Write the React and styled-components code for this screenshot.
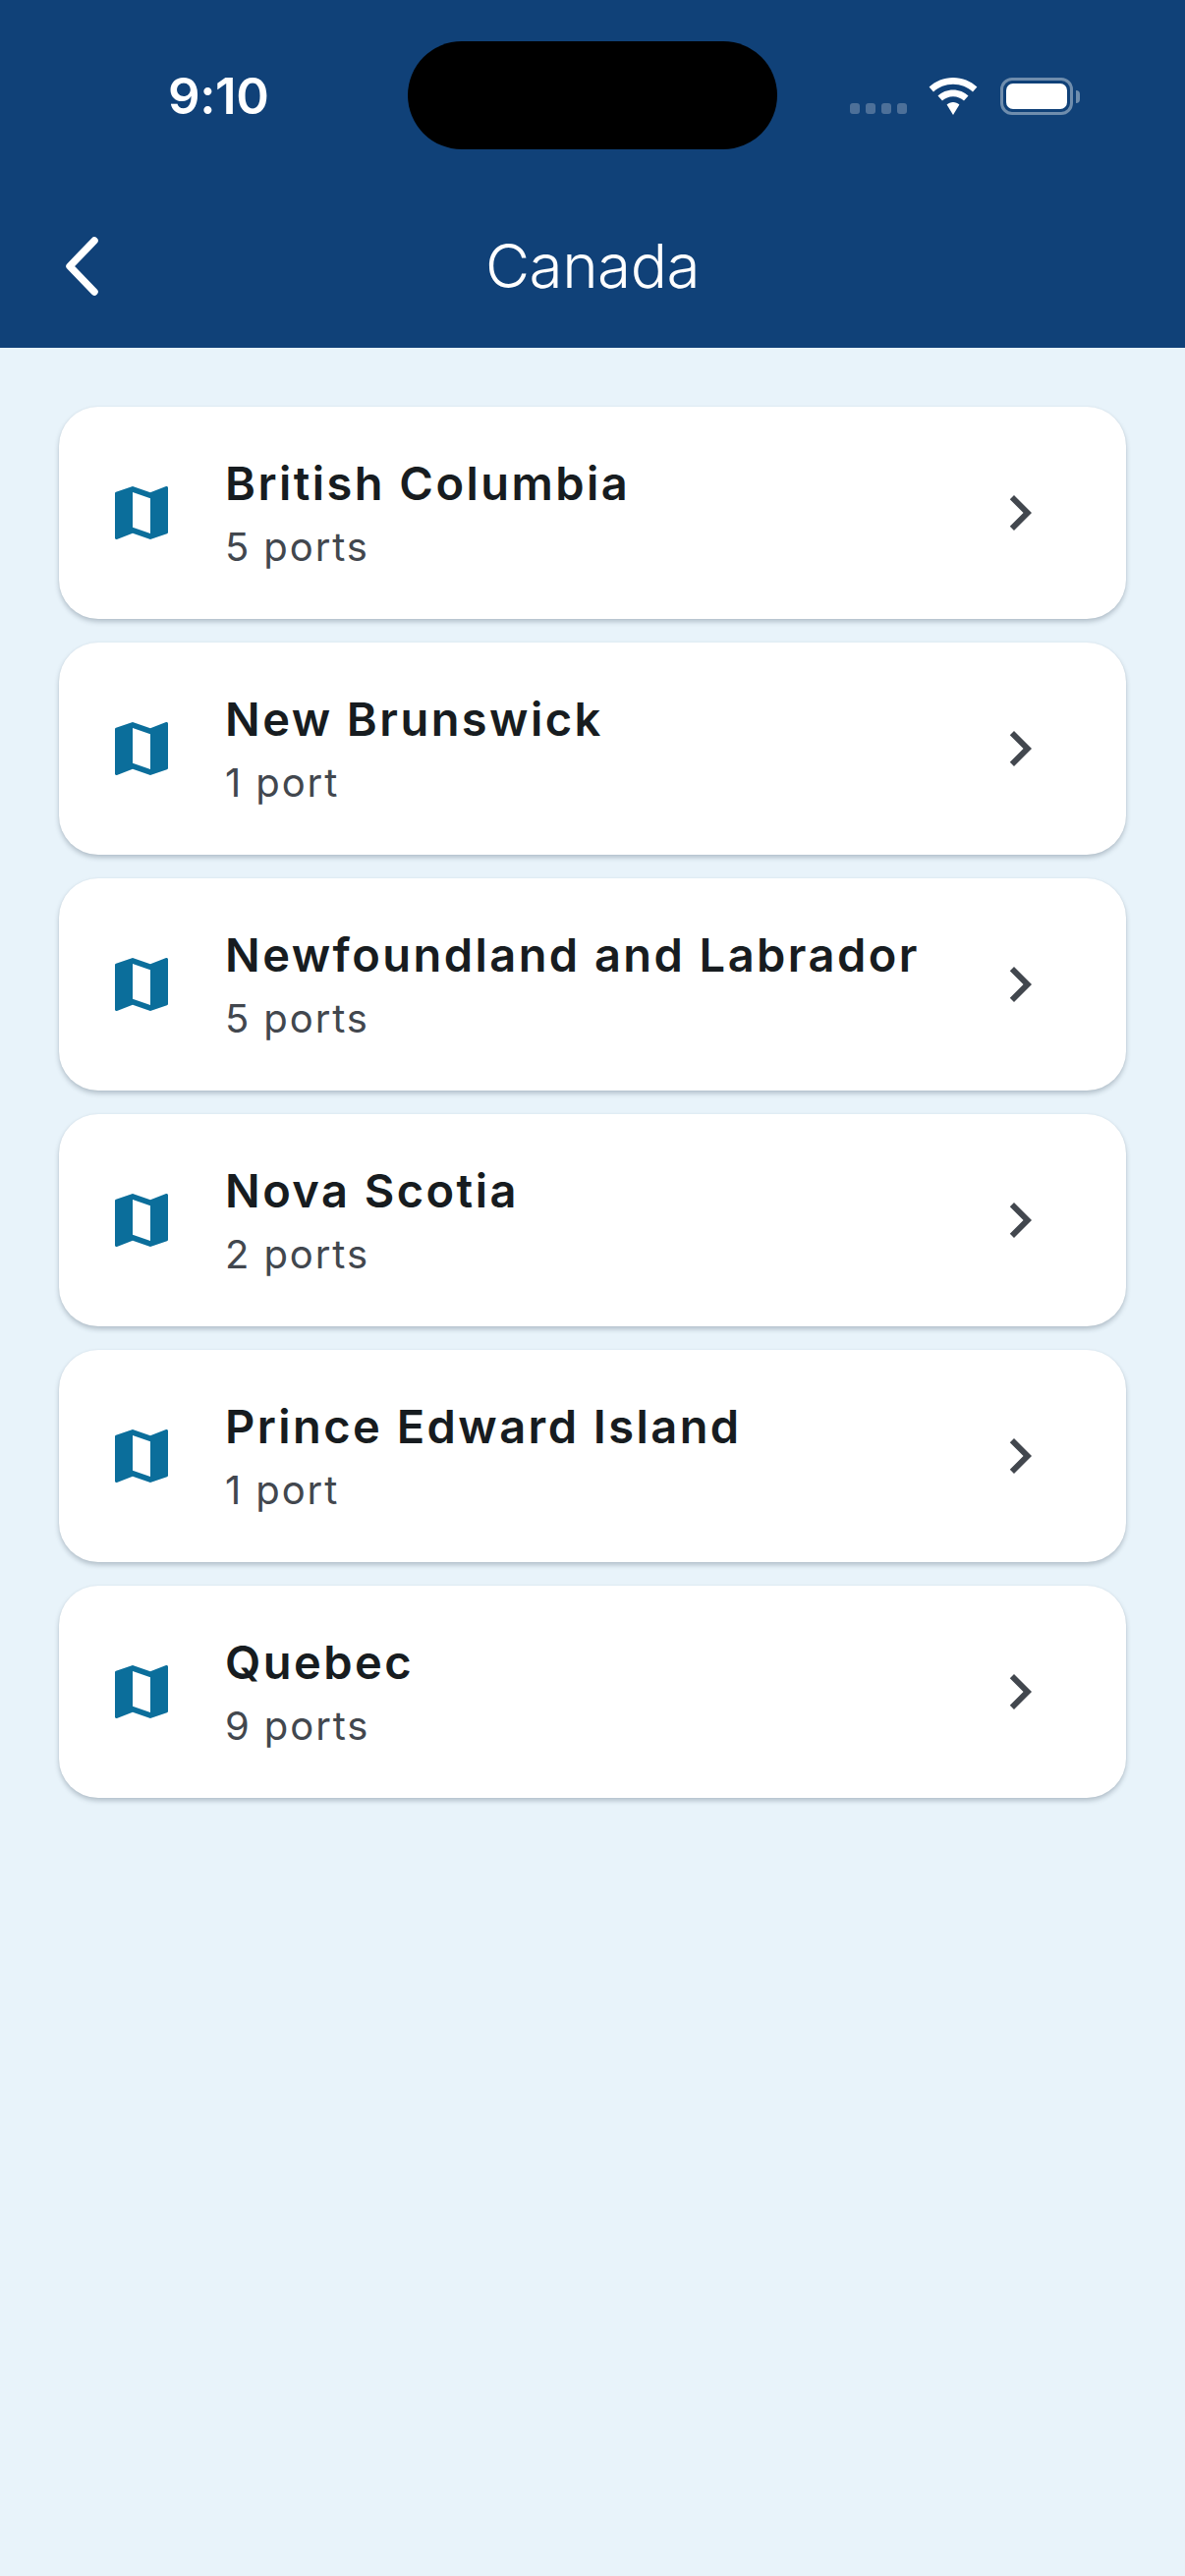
import React from "react";
import styled, { createGlobalStyle } from "styled-components";

const Global = createGlobalStyle`
  html, body { margin: 0; padding: 0; background: #e8f3fa; }
  body { font-family: Inter, "Noto Sans", sans-serif; }
`;

const Page = styled.div`
  width: 1206px;
  height: 2622px;
  background: #e8f3fa;
  overflow: hidden;
  display: flex;
  flex-direction: column;
`;

const Header = styled.header`
  height: 354px;
  background: #104178;
  color: #fff;
  display: flex;
  flex-direction: column;
  flex-shrink: 0;
`;

const StatusBar = styled.div`
  height: 152px;
  padding-top: 42px;
  box-sizing: border-box;
  display: flex;
  align-items: flex-start;
`;

const Time = styled.div`
  width: 415px;
  box-sizing: border-box;
  padding: 29px 0 0 171px;
  font-size: 51px;
  line-height: 54px;
  font-weight: 600;
  letter-spacing: -0.4px;
`;

const Island = styled.div`
  width: 376px;
  height: 110px;
  background: #000;
  border-radius: 55px;
  flex-shrink: 0;
`;

const StatusIcons = styled.div`
  margin-left: 74px;
  padding-top: 36px;
  height: 40px;
  display: flex;
  align-items: center;
  position: relative;
`;

const Dots = styled.div`
  display: flex;
  gap: 6px;
  margin-right: 22px;
  padding-top: 24px;
`;

const Dot = styled.span`
  width: 10px;
  height: 11px;
  border-radius: 3px;
  background: #4d7099;
`;

const Battery = styled.div`
  margin-left: 23px;
  width: 74px;
  height: 38px;
  box-sizing: border-box;
  border: 3px solid #6f8dad;
  border-radius: 12px;
  padding: 3px;
  display: flex;
`;

const BatteryFill = styled.div`
  flex: 1;
  background: #fff;
  border-radius: 7px;
`;

const BatteryCap = styled.div`
  width: 4px;
  height: 13px;
  margin-left: 3px;
  background: #6f8dad;
  border-radius: 0 4px 4px 0;
`;

const NavBar = styled.div`
  flex: 1;
  display: grid;
  grid-template-columns: 1fr auto 1fr;
  align-items: center;
  padding-top: 36px;
`;

const BackButton = styled.button`
  all: unset;
  display: flex;
  align-items: center;
  padding-left: 66px;
`;

const NavTitle = styled.h1`
  margin: 0;
  font-size: 62px;
  font-weight: 350;
  line-height: 76px;
  letter-spacing: -0.5px;
`;

const List = styled.main`
  display: flex;
  flex-direction: column;
  gap: 24px;
  padding: 60px 60px 0;
`;

const Card = styled.div`
  height: 216px;
  box-sizing: border-box;
  background: #fff;
  border-radius: 40px;
  box-shadow: 0 3px 5px rgba(30, 50, 70, 0.26), 0 0 2px rgba(30, 50, 70, 0.06);
  display: flex;
  align-items: center;
  padding: 0 72px 0 48px;
`;

const MapIconBox = styled.svg`
  width: 72px;
  height: 72px;
  fill: #0b6e9b;
  flex-shrink: 0;
`;

const CardText = styled.div`
  flex: 1;
  margin-left: 49px;
  display: flex;
  flex-direction: column;
`;

const CardTitle = styled.div`
  font-size: 47px;
  line-height: 62px;
  padding-top: 1px;
  font-weight: 575;
  letter-spacing: 2.45px;
  color: #171c20;
`;

const CardSub = styled.div`
  font-size: 40px;
  line-height: 56px;
  margin-top: 6px;
  font-weight: 400;
  letter-spacing: 1.9px;
  color: #42474e;
`;

const Chevron = styled.svg`
  width: 72px;
  height: 72px;
  fill: #42474e;
  flex-shrink: 0;
`;

const regions = [
  ["British Columbia", "5 ports"],
  ["New Brunswick", "1 port"],
  ["Newfoundland and Labrador", "5 ports"],
  ["Nova Scotia", "2 ports"],
  ["Prince Edward Island", "1 port"],
  ["Quebec", "9 ports"],
];

export default function App() {
  return (
    <Page>
      <Global />
      <Header>
        <StatusBar>
          <Time>9:10</Time>
          <Island />
          <StatusIcons>
            <Dots>
              <Dot /><Dot /><Dot /><Dot />
            </Dots>
            <svg width="50" height="38" viewBox="0 0 50 38" fill="#fff">
              <path d="M25 0C15.5 0 7 3.6 0.6 9.6L5 14.6C10.2 9.8 17.2 6.8 25 6.8S39.8 9.8 45 14.6L49.4 9.6C43 3.6 34.5 0 25 0Z" />
              <path d="M25 12.5C19 12.5 13.6 14.8 9.5 18.6L14 23.6C16.9 21 20.8 19.3 25 19.3S33.1 21 36 23.6L40.5 18.6C36.4 14.8 31 12.5 25 12.5Z" />
              <path d="M25 25C22.6 25 20.3 25.9 18.6 27.5L25 38L31.4 27.5C29.7 25.9 27.4 25 25 25Z" />
            </svg>
            <Battery>
              <BatteryFill />
            </Battery>
            <BatteryCap />
          </StatusIcons>
        </StatusBar>
        <NavBar>
          <BackButton aria-label="Back">
            <svg width="36" height="62" viewBox="0 0 36 62" fill="none" stroke="#fff" strokeWidth="7.5" strokeLinecap="round" strokeLinejoin="round">
              <path d="M30 5L5 31L30 57" />
            </svg>
          </BackButton>
          <NavTitle>Canada</NavTitle>
        </NavBar>
      </Header>
      <List>
        {regions.map(([name, ports]) => (
          <Card key={name}>
            <MapIconBox viewBox="0 0 24 24">
              <path d="M20.5 3l-.16.03L15 5.1 9 3 3.36 4.9c-.21.07-.36.25-.36.48V20.5c0 .28.22.5.5.5l.16-.03L9 18.9l6 2.1 5.64-1.9c.21-.07.36-.25.36-.48V3.5c0-.28-.22-.5-.5-.5zM15 19l-6-2.11V5l6 2.11V19z" />
            </MapIconBox>
            <CardText>
              <CardTitle>{name}</CardTitle>
              <CardSub>{ports}</CardSub>
            </CardText>
            <Chevron viewBox="0 0 24 24">
              <path d="M10 6L8.59 7.41 13.17 12l-4.58 4.59L10 18l6-6z" />
            </Chevron>
          </Card>
        ))}
      </List>
    </Page>
  );
}
